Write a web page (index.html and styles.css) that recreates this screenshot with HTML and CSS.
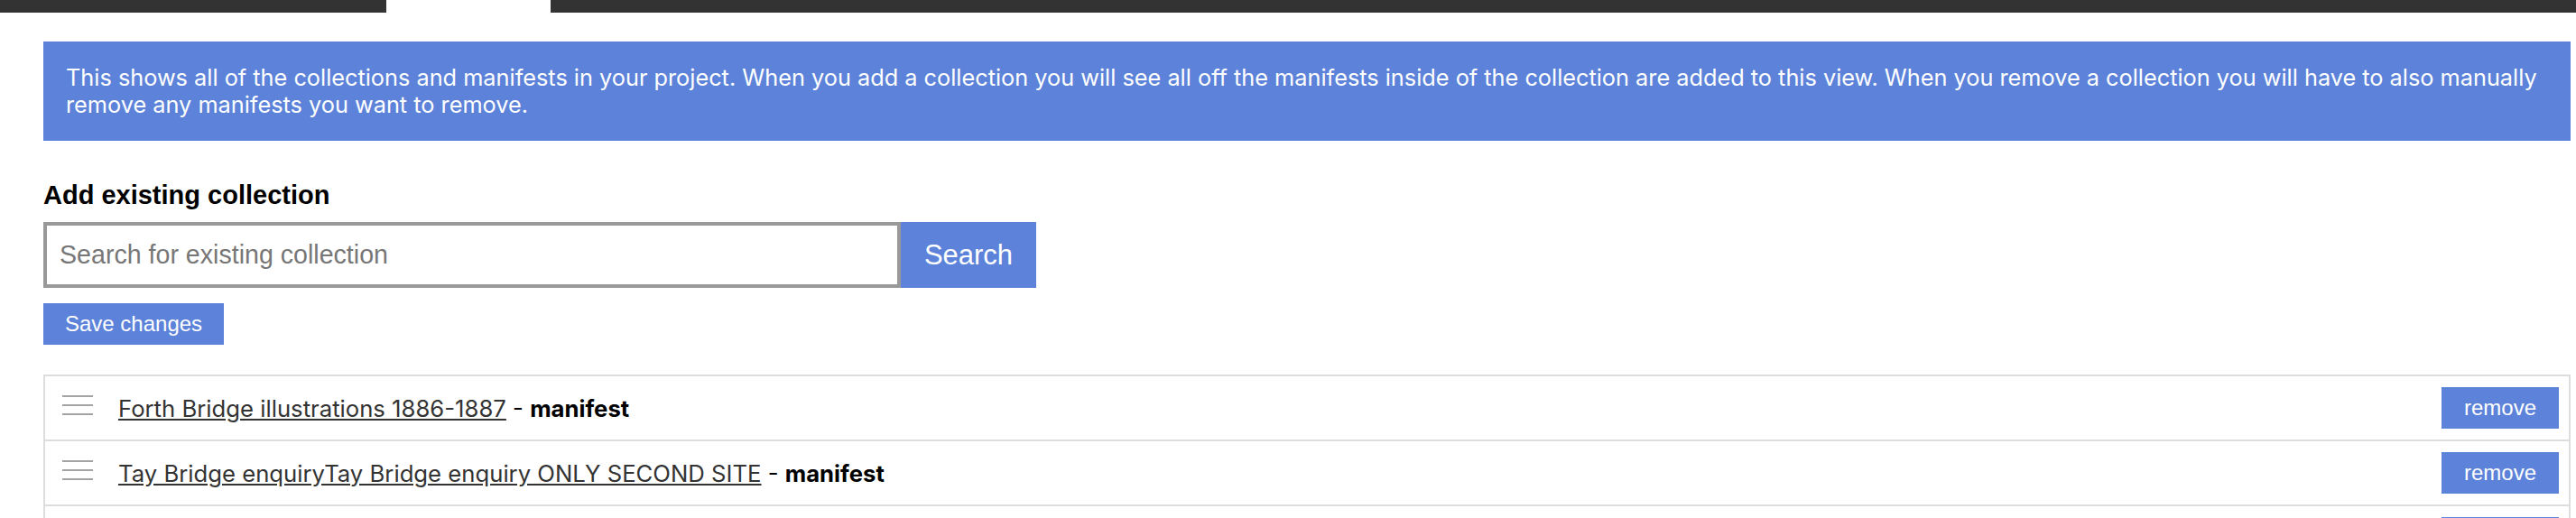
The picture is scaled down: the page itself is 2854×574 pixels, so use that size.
FILE: index.html
```html
<!DOCTYPE html>
<html lang="en">
<head>
<meta charset="utf-8">
<title>Collections</title>
<link rel="stylesheet" href="styles.css">
</head>
<body>
<div class="tabs">
  <div class="tab-dark tab-first"></div>
  <div class="tab-active"></div>
  <div class="tab-dark tab-rest"></div>
</div>
<main class="page">
  <div class="info">This shows all of the collections and manifests in your project. When you add a collection you will see all off the manifests inside of the collection are added to this view. When you remove a collection you will have to also manually remove any manifests you want to remove.</div>
  <h3 class="heading">Add existing collection</h3>
  <div class="search">
    <input class="search-input" type="text" placeholder="Search for existing collection">
    <button class="search-btn">Search</button>
  </div>
  <button class="save-btn">Save changes</button>
  <ul class="list">
    <li class="row">
      <span class="handle"><i></i><i></i><i></i></span>
      <span class="label"><a class="link" href="#">Forth Bridge illustrations 1886-1887</a> - <b>manifest</b></span>
      <button class="remove-btn">remove</button>
    </li>
    <li class="row">
      <span class="handle"><i></i><i></i><i></i></span>
      <span class="label"><a class="link" href="#">Tay Bridge enquiryTay Bridge enquiry ONLY SECOND SITE</a> - <b>manifest</b></span>
      <button class="remove-btn">remove</button>
    </li>
    <li class="row">
      <span class="handle"><i></i><i></i><i></i></span>
      <span class="label"><a class="link" href="#">Tay Bridge enquiry</a> - <b>manifest</b></span>
      <button class="remove-btn">remove</button>
    </li>
  </ul>
</main>
</body>
</html>
```
FILE: styles.css
```css
html, body {
  margin: 0;
  padding: 0;
  background: #fff;
}
body {
  width: 2854px;
  overflow: hidden;
  font-family: "Liberation Sans", Arial, sans-serif;
}
.tabs {
  display: flex;
  height: 14px;
}
.tab-dark {
  background: #333333;
}
.tab-first {
  width: 428px;
}
.tab-active {
  width: 182px;
  background: #fff;
}
.tab-rest {
  flex: 1;
}
.page {
  margin: 32px 0 0 48px;
  width: 2800px;
}
.info {
  background: #5c82d9;
  color: #fff;
  font-family: Inter, "Noto Sans", sans-serif;
  font-size: 25.3px;
  line-height: 30px;
  padding: 25px 12px 25px 25px;
}
.heading {
  margin: 44px 0 0 0;
  font-size: 29px;
  line-height: 33px;
  font-weight: bold;
  color: #000;
}
.search {
  display: flex;
  margin-top: 13px;
  height: 73px;
}
.search-input {
  box-sizing: border-box;
  width: 950px;
  height: 73px;
  margin: 0;
  border: 4px solid #999;
  padding: 0 14px;
  font-family: "Liberation Sans", Arial, sans-serif;
  font-size: 28.6px;
  color: #333;
  outline: none;
}
.search-input::placeholder {
  color: #777;
}
.search-btn {
  width: 150px;
  height: 73px;
  margin: 0;
  border: 0;
  padding: 0;
  background: #5c82d9;
  color: #fff;
  font-family: "Liberation Sans", Arial, sans-serif;
  font-size: 31px;
}
.save-btn {
  display: block;
  margin-top: 17px;
  height: 46px;
  padding: 0 24px;
  border: 0;
  background: #5c82d9;
  color: #fff;
  font-family: "Liberation Sans", Arial, sans-serif;
  font-size: 24px;
}
.list {
  list-style: none;
  margin: 33px 0 0 0;
  padding: 0;
  border: 2px solid #dddddd;
  border-bottom: 0;
}
.row {
  display: flex;
  align-items: center;
  height: 70px;
  padding: 0 11px 0 19px;
  border-bottom: 2px solid #dddddd;
}
.handle {
  display: flex;
  flex-direction: column;
  justify-content: space-between;
  width: 34px;
  height: 22px;
  margin-top: -6px;
  margin-right: 28px;
}
.handle i {
  display: block;
  height: 2px;
  background: #a3a3a3;
}
.label {
  flex: 1;
  font-family: Inter, "Noto Sans", sans-serif;
  font-size: 25.7px;
  color: #000;
}
.link {
  color: #333;
  text-decoration: underline;
}
.label b {
  font-weight: bold;
  color: #000;
}
.remove-btn {
  height: 46px;
  width: 130px;
  padding: 0;
  border: 0;
  background: #5c82d9;
  color: #fff;
  font-family: "Liberation Sans", Arial, sans-serif;
  font-size: 24px;
}
```
